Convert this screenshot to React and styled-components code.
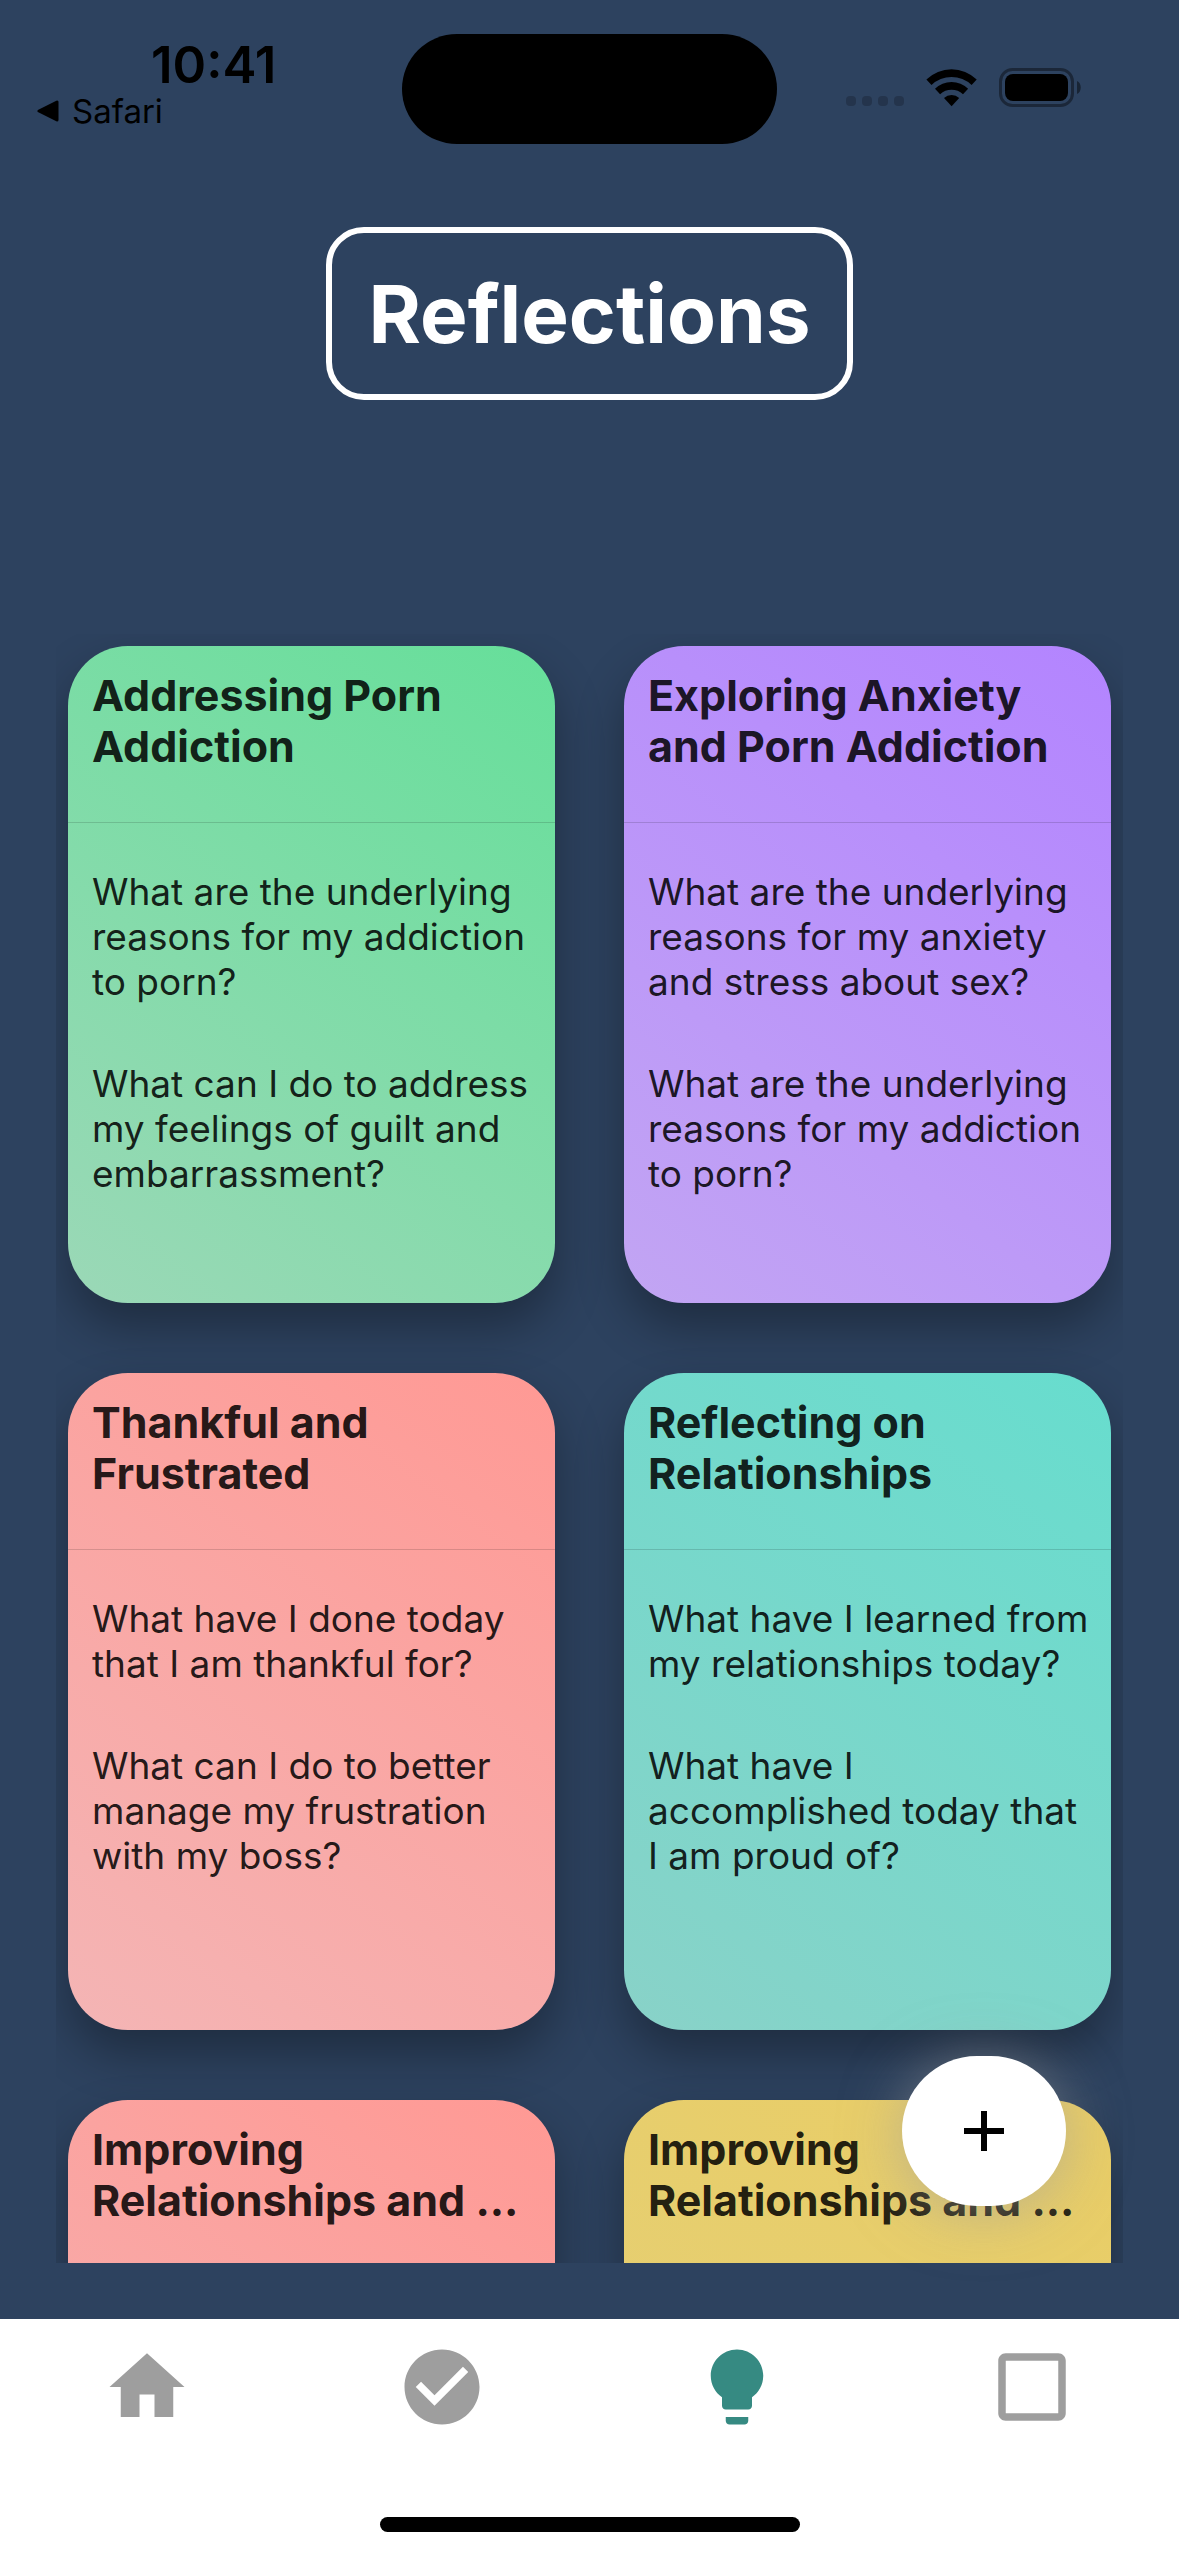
import React from "react";
import styled, { createGlobalStyle } from "styled-components";

const GlobalStyle = createGlobalStyle`
  * { box-sizing: border-box; }
  body { margin: 0; background: #2d425f; }
  button { font: inherit; border: 0; padding: 0; background: none; cursor: pointer; }
`;

const Screen = styled.div`
  height: 100vh;
  display: flex;
  flex-direction: column;
  background: #2d425f;
  font-family: Inter, Roboto, "Liberation Sans", sans-serif;
`;

const StatusBar = styled.header`
  display: grid;
  grid-template-columns: 1fr 375px 1fr;
  height: 144px;
  padding-top: 34px;
`;

const StatusLeft = styled.div`
  display: flex;
  flex-direction: column;
  align-items: flex-start;
  padding-left: 37px;
`;

const Clock = styled.time`
  margin-left: 114px;
  font-size: 51px;
  line-height: 62px;
  font-weight: 600;
`;

const BackLink = styled.button`
  display: flex;
  align-items: center;
  gap: 12px;
  font-size: 33px;
  line-height: 30px;
  color: #000;
`;

const Island = styled.div`
  height: 110px;
  border-radius: 55px;
  background: #000;
`;

const StatusIcons = styled.div`
  display: flex;
  align-items: flex-start;
  justify-content: flex-end;
  padding: 32px 97px 0 0;
`;

const PageHeader = styled.div`
  display: flex;
  justify-content: center;
  padding: 83px 24px 0;
`;

const PageTitle = styled.h1`
  margin: 0;
  padding: 36px 36px;
  border: 6px solid #fff;
  border-radius: 38px;
  color: #fff;
  font-size: 80px;
  line-height: 89px;
  font-weight: 700;
`;

const Board = styled.main`
  position: relative;
  flex: 1;
  min-height: 0;
  display: flex;
  margin: 234px 56px 56px;
`;

const CardGrid = styled.div`
  flex: 1;
  display: grid;
  grid-template-columns: 1fr 1fr;
  grid-auto-rows: min-content;
  gap: 70px 69px;
  padding: 12px;
  overflow-y: auto;
  scrollbar-width: none;
`;

const Card = styled.article`
  min-height: 657px;
  border-radius: 60px;
  background: linear-gradient(217deg, ${(p) => p.$from}, ${(p) => p.$to});
  box-shadow: 0 24px 48px rgba(0, 0, 0, 0.32);
  color: rgba(0, 0, 0, 0.87);
`;

const CardTitle = styled.h2`
  margin: 0;
  height: 177px;
  padding: 24px 20px 0 24px;
  border-bottom: 1px solid rgba(0, 0, 0, 0.14);
  font-size: 43px;
  line-height: 51px;
  font-weight: 700;
`;

const Prompts = styled.div`
  display: flex;
  flex-direction: column;
  gap: 57px;
  padding: 46px 20px 36px 24px;
`;

const Prompt = styled.p`
  margin: 0;
  font-size: 37px;
  line-height: 45px;
`;

const AddButton = styled.button`
  position: absolute;
  right: 57px;
  bottom: 57px;
  display: grid;
  place-items: center;
  width: 164px;
  height: 150px;
  border-radius: 75px;
  && { background: #fff; }
  box-shadow: 0 6px 60px rgba(158, 158, 158, 0.6);
`;

const TabBar = styled.nav`
  display: grid;
  grid-template-columns: repeat(4, 1fr);
  height: 237px;
  padding-top: 23px;
  background: #fff;
  align-content: space-between;
`;

const Tab = styled.button`
  display: flex;
  justify-content: center;
  color: ${(p) => (p.$active ? "#368a82" : "#9e9e9e")};
`;

const HomeIndicator = styled.div`
  grid-column: 1 / -1;
  justify-self: center;
  width: 420px;
  height: 15px;
  margin-bottom: 24px;
  border-radius: 8px;
  background: #000;
`;

const cards = [
  {
    title: "Addressing Porn Addiction",
    from: "#66df9a",
    to: "#9bd8b7",
    prompts: [
      "What are the underlying reasons for my addiction to porn?",
      "What can I do to address my feelings of guilt and embarrassment?",
    ],
  },
  {
    title: "Exploring Anxiety and Porn Addiction",
    from: "#b384ff",
    to: "#c2a5f3",
    prompts: [
      "What are the underlying reasons for my anxiety and stress about sex?",
      "What are the underlying reasons for my addiction to porn?",
    ],
  },
  {
    title: "Thankful and Frustrated",
    from: "#ff9994",
    to: "#f4b5b5",
    prompts: [
      "What have I done today that I am thankful for?",
      "What can I do to better manage my frustration with my boss?",
    ],
  },
  {
    title: "Reflecting on Relationships",
    from: "#67ddce",
    to: "#89d2c8",
    prompts: [
      "What have I learned from my relationships today?",
      "What have I accomplished today that I am proud of?",
    ],
  },
  { title: "Improving Relationships and ...", from: "#ff9994", to: "#f4b5b5", prompts: [] },
  { title: "Improving Relationships and ...", from: "#e9cd65", to: "#e4d07a", prompts: [] },
];

const tabs = [
  { name: "Home", path: "M10 20v-6h4v6h5v-8h3L12 3 2 12h3v8z" },
  {
    name: "Tasks",
    path: "M12 2C6.48 2 2 6.48 2 12s4.48 10 10 10 10-4.48 10-10S17.52 2 12 2zm-2 15l-5-5 1.41-1.41L10 14.17l7.59-7.59L19 8l-9 9z",
  },
  {
    name: "Reflections",
    active: true,
    path: "M9 21c0 .55.45 1 1 1h4c.55 0 1-.45 1-1v-1H9v1zm3-19C8.14 2 5 5.14 5 9c0 2.38 1.19 4.47 3 5.74V17c0 .55.45 1 1 1h6c.55 0 1-.45 1-1v-2.26c1.81-1.27 3-3.36 3-5.74 0-3.86-3.14-7-7-7z",
  },
  {
    name: "More",
    path: "M19 5v14H5V5h14m0-2H5c-1.1 0-2 .9-2 2v14c0 1.1.9 2 2 2h14c1.1 0 2-.9 2-2V5c0-1.1-.9-2-2-2z",
  },
];

function DeviceIcons() {
  return (
    <svg width="237" height="42" viewBox="845 66 237 42" aria-hidden="true">
      <g fill="rgba(0,0,0,.2)">
        {[846, 862, 878, 894].map((x) => (
          <rect key={x} x={x} y="96" width="10" height="10" rx="4" />
        ))}
      </g>
      <g fill="#000">
        <path d="M926.4 79.600a36 36 0 0 1 50.300 0l-5.100 5.400a29 29 0 0 0-40.100 0z" />
        <path d="M935 88.800a23.500 23.500 0 0 1 33.100 0l-5.100 5.500a17 17 0 0 0-22.900 0z" />
        <path d="M944 98a11 11 0 0 1 15.200 0l-7.600 8.200z" />
        <rect x="1005" y="74" width="63" height="27" rx="8" />
      </g>
      <rect x="1000.500" y="69.500" width="72" height="36" rx="12" fill="none" stroke="rgba(0,0,0,.4)" strokeWidth="3" />
      <path d="M1077 81c5 2 5 11 0 13z" fill="rgba(0,0,0,.45)" />
    </svg>
  );
}

export default function App() {
  return (
    <Screen>
      <GlobalStyle />
      <StatusBar>
        <StatusLeft>
          <Clock>10:41</Clock>
          <BackLink>
            <svg width="23" height="24" viewBox="0 0 23 24" aria-hidden="true">
              <path d="M2 12L20 3v18z" stroke="#000" strokeWidth="3" strokeLinejoin="round" />
            </svg>
            Safari
          </BackLink>
        </StatusLeft>
        <Island />
        <StatusIcons>
          <DeviceIcons />
        </StatusIcons>
      </StatusBar>
      <PageHeader>
        <PageTitle>Reflections</PageTitle>
      </PageHeader>
      <Board>
        <CardGrid>
          {cards.map((card, i) => (
            <Card key={i} $from={card.from} $to={card.to}>
              <CardTitle>{card.title}</CardTitle>
              <Prompts>
                {card.prompts.map((text) => (
                  <Prompt key={text}>{text}</Prompt>
                ))}
              </Prompts>
            </Card>
          ))}
        </CardGrid>
        <AddButton aria-label="Add reflection">
          <svg width="40" height="40" viewBox="0 0 40 40" aria-hidden="true">
            <path d="M20 0v40M0 20h40" stroke="#000" strokeWidth="6" />
          </svg>
        </AddButton>
      </Board>
      <TabBar>
        {tabs.map((tab) => (
          <Tab key={tab.name} $active={tab.active} aria-label={tab.name}>
            <svg width="90" height="90" viewBox="0 0 24 24" fill="currentColor" aria-hidden="true">
              <path d={tab.path} />
            </svg>
          </Tab>
        ))}
        <HomeIndicator />
      </TabBar>
    </Screen>
  );
}
